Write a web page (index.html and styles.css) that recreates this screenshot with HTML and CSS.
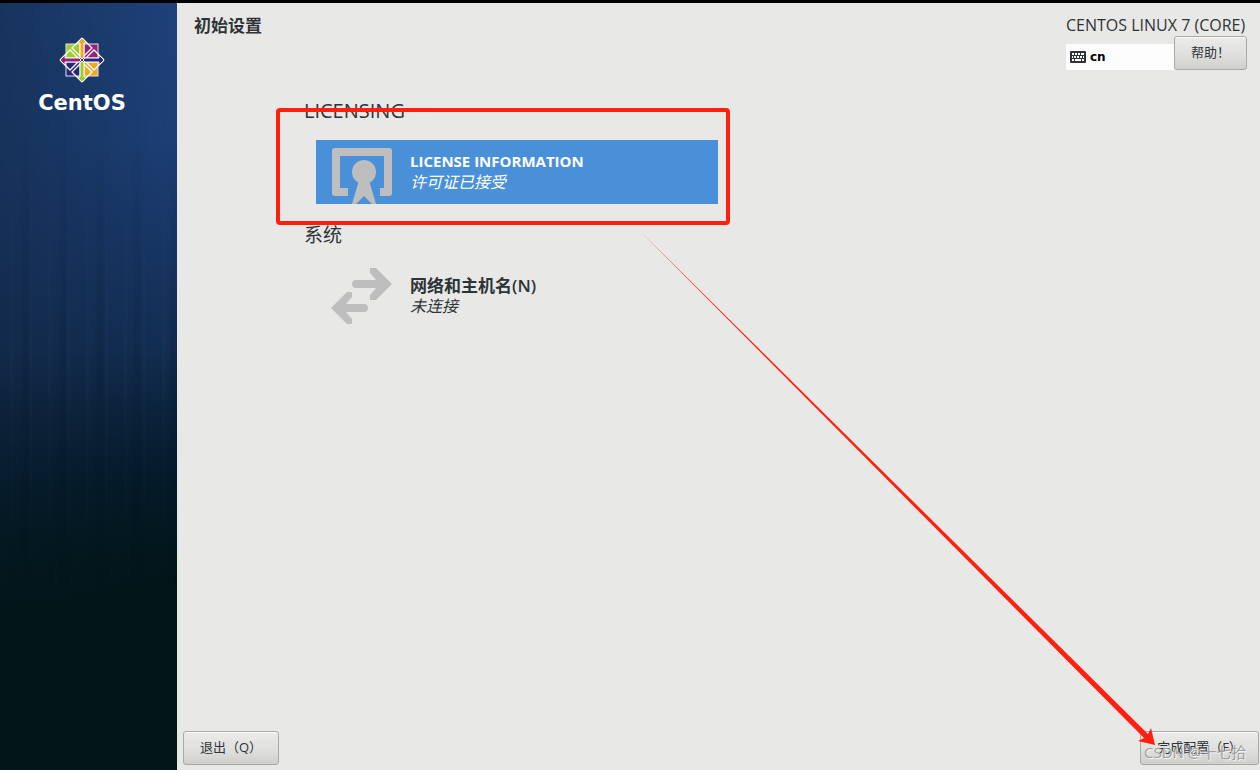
FILE: index.html
```html
<!DOCTYPE html>
<html lang="zh-CN">
<head>
<meta charset="utf-8">
<title>初始设置</title>
<link rel="stylesheet" href="styles.css">
</head>
<body>
<div class="screen">
  <aside class="sidebar">
    <svg class="logo" viewBox="-24 -24 48 48" aria-hidden="true">
      <g stroke="#e4e2ee" stroke-width="1">
        <rect x="-16" y="-16" width="14" height="14" fill="#9ccd2a"/>
        <rect x="2" y="-16" width="14" height="14" fill="#932279"/>
        <rect x="-16" y="2" width="14" height="14" fill="#262577"/>
        <rect x="2" y="2" width="14" height="14" fill="#efa724"/>
      </g>
      <g fill="none" stroke="#fff" stroke-width="1.3">
        <path d="M0-22 10-12 2-4M0-22-10-12-2-4"/>
        <path d="M22 0 12-10 4-2M22 0 12 10 4 2"/>
        <path d="M0 22 10 12 2 4M0 22-10 12-2 4"/>
        <path d="M-22 0-12-10-4-2M-22 0-12 10-4 2"/>
      </g>
      <g stroke="#fff" stroke-width="1">
        <path fill="#efa724" d="M0-22 5-17H2V-3L0-1-2-3V-17H-5Z"/>
        <path fill="#262577" d="M22 0 17 5V2H3L1 0 3-2H17V-5Z"/>
        <path fill="#9ccd2a" d="M0 22-5 17H-2V3L0 1 2 3V17H5Z"/>
        <path fill="#932279" d="M-22 0-17-5V-2H-3L-1 0-3 2H-17V5Z"/>
      </g>
      <rect x="-1" y="-1" width="2" height="2" fill="#1b3a6b"/>
    </svg>
    <div class="wordmark">CentOS</div>
  </aside>

  <main class="main">
    <header class="header">
      <h1 class="title">初始设置</h1>
      <div class="product">
        <div class="product-name">CENTOS LINUX 7 (CORE)</div>
        <div class="tools">
          <button class="layout" type="button">
            <svg width="16" height="12" viewBox="0 0 16 12" aria-hidden="true">
              <rect width="16" height="12" rx="1" fill="#2e3436"/>
              <path stroke="#fff" stroke-width="2" d="M2 3h2M5 3h2M8 3h2M11 3h3M2 6h1M4 6h2M7 6h2M10 6h2M13 6h1M2 9h2M5 9h6M12 9h2"/>
            </svg>
            cn
          </button>
          <button class="btn help" type="button">帮助！</button>
        </div>
      </div>
    </header>

    <div class="hub">
      <section>
        <h2 class="category category-latin">LICENSING</h2>
        <button class="spoke selected" type="button">
          <svg class="spoke-icon" viewBox="0 0 64 64" aria-hidden="true">
            <path fill="#bebebe" d="M5 8H59Q62 8 62 11V53Q62 56 59 56H50V48H54V16H10V48H18V56H5Q2 56 2 53V11Q2 8 5 8Z"/>
            <circle cx="34" cy="32" r="12" fill="#bebebe"/>
            <path fill="#bebebe" d="M29 40H39L46 64H42L34 56 26 64H22Z"/>
          </svg>
          <span class="spoke-text">
            <span class="spoke-name spoke-name-latin">LICENSE INFORMATION</span>
            <span class="spoke-status">许可证已接受</span>
          </span>
          <span class="highlight"></span>
        </button>
      </section>
      <section>
        <h2 class="category">系统</h2>
        <button class="spoke" type="button">
          <svg class="spoke-icon" viewBox="0 0 64 64" aria-hidden="true">
            <g fill="#bebebe">
              <path d="M40 4H46L62 20 46 36H40V31L46 24H26A4 4 0 0 1 26 16H46L40 9Z"/>
              <path d="M22 28H17L1 44 17 60H22V55L16 48H34A4 4 0 0 0 34 40H16L22 33Z"/>
            </g>
          </svg>
          <span class="spoke-text">
            <span class="spoke-name">网络和主机名(N)</span>
            <span class="spoke-status">未连接</span>
          </span>
        </button>
      </section>
    </div>

    <footer class="footer">
      <button class="btn" type="button">退出（Q）</button>
      <button class="btn finish" type="button">完成配置（F）<span class="watermark">CSDN @十七拾</span></button>
    </footer>
  </main>

  <svg class="arrow" viewBox="0 0 1260 770" preserveAspectRatio="none" aria-hidden="true">
    <path fill="#ff2010" d="M641 232 1148 734 1151 728 1155 745 1138 741 1144 738Z"/>
  </svg>
</div>
</body>
</html>
```
FILE: styles.css
```css
* {
  box-sizing: border-box;
}

body {
  margin: 0;
  color: #2e3436;
  font-family: "Open Sans", "Noto Sans CJK SC", sans-serif;
}

h1,
h2 {
  margin: 0;
}

button {
  margin: 0;
  color: inherit;
  font-family: inherit;
}

.screen {
  position: relative;
  display: flex;
  min-height: 100vh;
  border-top: 3px solid #000;
  background: #e8e8e6;
}

.sidebar {
  position: relative;
  display: flex;
  flex: 0 0 177px;
  flex-direction: column;
  align-items: center;
  padding: 33px 13px 0 0;
  background:
    linear-gradient(transparent 45%, #011519 80%),
    linear-gradient(90deg, rgba(18, 38, 66, 0.5), transparent),
    linear-gradient(#1e417a, #1c3f75 18%, #1a396c 26%, #15325c 38%, #102a4c 50%, #08203a 62%, #02161b 76%, #011519);
}

.sidebar::after {
  content: "";
  position: absolute;
  inset: 110px 0 180px;
  background:
    repeating-linear-gradient(90deg, transparent 0 9px, rgba(60, 100, 130, 0.08) 11px 12px, transparent 14px 19px),
    repeating-linear-gradient(90deg, transparent 0 21px, rgba(0, 10, 20, 0.1) 24px 28px, transparent 31px 37px);
  mask-image: linear-gradient(transparent, #000 50%, transparent);
}

.logo {
  width: 48px;
  height: 48px;
}

.wordmark {
  color: #fff;
  font: bold 21px/24px "DejaVu Sans", sans-serif;
  margin-top: 7px;
}

.main {
  display: flex;
  flex: 1;
  flex-direction: column;
  min-width: 0;
}

.header {
  display: flex;
  justify-content: space-between;
  padding: 11px 13px 0 17px;
}

.title {
  font-size: 17px;
  line-height: 23px;
}

.product {
  min-width: 181px;
}

.product-name {
  font-size: 16px;
  line-height: 22px;
}

.tools {
  display: flex;
  align-items: flex-end;
}

.layout {
  display: flex;
  flex: 1;
  align-items: center;
  gap: 4px;
  height: 26px;
  padding: 0 4px;
  border: 0;
  background: #fdfdfd;
  color: #000;
  font: bold 12px/16px "DejaVu Sans", sans-serif;
}

.btn {
  height: 34px;
  padding: 0 15px 2px;
  border: 1px solid #a9a9a5;
  border-radius: 3px;
  background: linear-gradient(#ebebea, #dededd 60%, #cfcfcc);
  box-shadow: inset 0 1px #fafafa;
  font-size: 13px;
  line-height: 20px;
  white-space: nowrap;
}

.help {
  width: 73px;
}

.hub {
  display: grid;
  flex: 1;
  grid-template-columns: minmax(0, 414px);
  align-content: start;
  gap: 18px;
  padding: 28px 12px 0 127px;
}

.category {
  font-size: 19px;
  font-weight: 400;
  line-height: 26px;
}

.category-latin {
  font-size: 20px;
}

.spoke {
  position: relative;
  display: flex;
  align-items: center;
  gap: 16px;
  width: calc(100% - 12px);
  height: 64px;
  margin: 16px 0 0 12px;
  padding: 0 14px;
  border: 0;
  background: none;
  text-align: left;
}

.selected {
  background: #4a90d9;
  color: #fff;
}

.spoke-icon {
  width: 64px;
  height: 64px;
}

.spoke-text {
  display: flex;
  flex-direction: column;
}

.spoke-name {
  font-size: 17px;
  font-weight: 600;
  line-height: 21px;
}

.spoke-name-latin {
  font-size: 15px;
  font-weight: 700;
}

.spoke-status {
  font-size: 16px;
  font-style: italic;
  line-height: 21px;
}

.highlight {
  position: absolute;
  inset: -32px -12px -21px -40px;
  border: 4px solid #ff2010;
  border-radius: 4px;
}

.footer {
  display: flex;
  justify-content: space-between;
  padding: 0 1px 5px 6px;
}

.footer .btn {
  min-width: 96px;
}

.footer .finish {
  position: relative;
  min-width: 119px;
}

.watermark {
  position: absolute;
  top: 10px;
  left: 3px;
  color: #a0a0a0;
  font-size: 15px;
  text-shadow: 1px 1px #f4f4f4;
}

.arrow {
  position: absolute;
  top: -3px;
  left: 0;
  width: 100%;
  height: 100vh;
  pointer-events: none;
}
```
